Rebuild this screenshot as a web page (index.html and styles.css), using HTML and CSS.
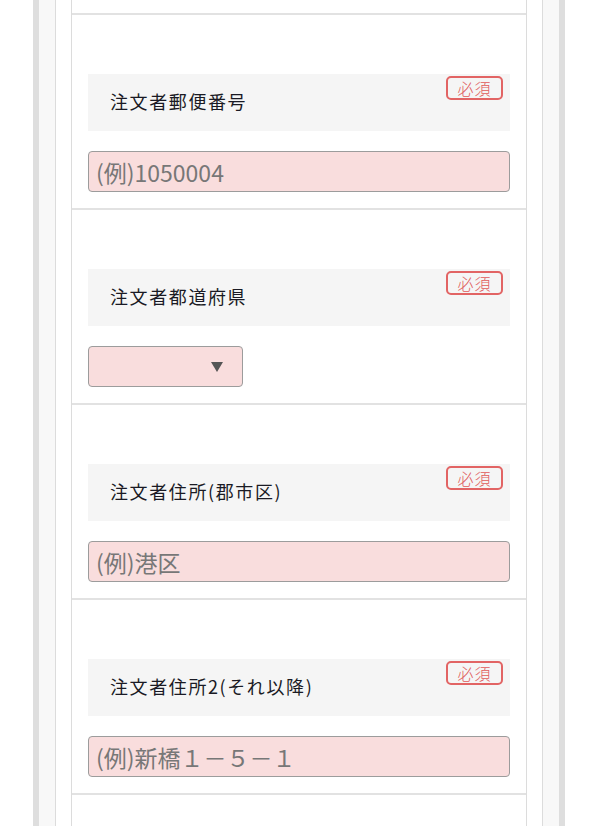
FILE: index.html
```html
<!DOCTYPE html>
<html lang="ja">
<head>
  <meta charset="UTF-8" />
  <meta name="viewport" content="width=device-width, initial-scale=1.0"/>
  <title>注文者情報</title>
  <link rel="stylesheet" href="styles.css">
</head>
<body>
  <div class="frame">
    <div class="panel">
      <div class="order-form">
        <div class="form-top"></div>

        <div class="field">
          <div class="field-label">
            注文者郵便番号
            <span class="required">必須</span>
          </div>
          <input type="text" class="field-input" placeholder="(例)1050004" />
        </div>

        <div class="field">
          <div class="field-label">
            注文者都道府県
            <span class="required">必須</span>
          </div>
          <div class="select-wrap">
            <select class="field-select">
              <option selected></option>
              <option>東京都</option>
              <option>大阪府</option>
            </select>
          </div>
        </div>

        <div class="field">
          <div class="field-label">
            注文者住所(郡市区)
            <span class="required">必須</span>
          </div>
          <input type="text" class="field-input" placeholder="(例)港区" />
        </div>

        <div class="field">
          <div class="field-label">
            注文者住所2(それ以降)
            <span class="required">必須</span>
          </div>
          <input type="text" class="field-input" placeholder="(例)新橋１－５－１" />
        </div>

        <div class="field field-next"></div>
      </div>
    </div>
  </div>
</body>
</html>
```

FILE: styles.css
```css
html, body {
  margin: 0;
  padding: 0;
  background: #fff;
  font-family: "Noto Sans CJK JP", "Noto Sans", sans-serif;
}

.frame {
  margin: 0 33px;
  border-left: 6px solid #dedede;
  border-right: 6px solid #dedede;
  background: #f8f8f8;
  padding: 0 16px;
  height: 826px;
  overflow: hidden;
}

.panel {
  background: #fff;
  border-left: 1px solid #dcdcdc;
  border-right: 1px solid #dcdcdc;
  padding: 0 15px;
  height: 100%;
}

.order-form {
  border-left: 1px solid #dcdcdc;
  border-right: 1px solid #dcdcdc;
  height: 100%;
}

.form-top {
  height: 13px;
  border-bottom: 2px solid #e2e2e2;
}

.field {
  padding: 59px 16px 16px;
  border-bottom: 2px solid #e2e2e2;
}

.field-next {
  border-bottom: none;
}

.field-label {
  position: relative;
  height: 57px;
  box-sizing: border-box;
  background: #f5f5f5;
  display: flex;
  align-items: center;
  padding: 0 0 3px 22px;
  font-size: 18px;
  letter-spacing: 1.6px;
  color: #1a1a24;
  margin-bottom: 20px;
}

.required {
  position: absolute;
  top: 2px;
  right: 7px;
  width: 57px;
  height: 24px;
  box-sizing: border-box;
  border: 2px solid #e26464;
  border-radius: 5px;
  color: #e05a5a;
  font-size: 16px;
  font-weight: 300;
  letter-spacing: 1px;
  line-height: 20px;
  text-align: center;
}

.field-input {
  display: block;
  width: 100%;
  height: 41px;
  box-sizing: border-box;
  margin: 0;
  padding: 0 7px;
  background: #f9dddd;
  border: 1px solid #9c9c9c;
  border-radius: 4px;
  font-family: "Noto Sans CJK JP", "Noto Sans", sans-serif;
  font-size: 23px;
  color: #333;
}

.field-input::placeholder {
  color: #777;
}

.select-wrap {
  position: relative;
  width: 155px;
}

.select-wrap::after {
  content: "";
  position: absolute;
  top: 16px;
  right: 20px;
  border-left: 6.5px solid transparent;
  border-right: 6.5px solid transparent;
  border-top: 10px solid #555;
  pointer-events: none;
}

.field-select {
  display: block;
  width: 155px;
  height: 41px;
  margin: 0;
  -webkit-appearance: none;
  appearance: none;
  background: #f9dddd;
  border: 1px solid #9c9c9c;
  border-radius: 4px;
  font-size: 18px;
}
```
